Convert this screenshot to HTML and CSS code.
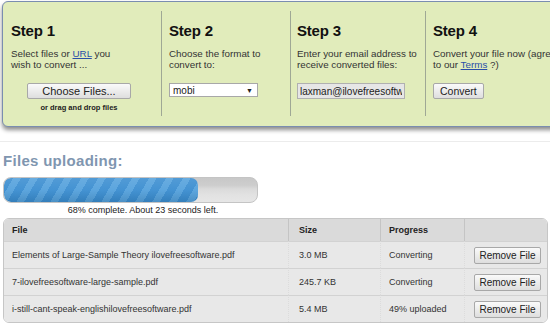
FILE: index.html
```html
<!DOCTYPE html>
<html lang="en">
<head>
  <meta charset="UTF-8">
  <title>File Converter</title>
  <link rel="stylesheet" href="styles.css">
</head>
<body>

  <div class="steps">
    <div class="step step1">
      <h2>Step 1</h2>
      <p>Select files or <a href="#">URL</a> you<br>wish to convert ...</p>
      <div class="choose">
        <button class="btn choose-btn">Choose Files...</button>
        <div class="drop">or drag and drop files</div>
      </div>
    </div>
    <div class="step step2">
      <h2>Step 2</h2>
      <p>Choose the format to<br>convert to:</p>
      <div class="select"><span>mobi</span><span class="arrow">&#9660;</span></div>
    </div>
    <div class="step step3">
      <h2>Step 3</h2>
      <p>Enter your email address to<br>receive converted files:</p>
      <input type="text" class="email" value="laxman@ilovefreesoftware.com" readonly>
    </div>
    <div class="step step4">
      <h2>Step 4</h2>
      <p>Convert your file now (agree<br>to our <a href="#">Terms</a> ?)</p>
      <button class="btn">Convert</button>
    </div>
  </div>

  <div class="rule"></div>

  <h1>Files uploading:</h1>

  <div class="bar">
    <div class="bar-fill" style="width: 194px"></div>
  </div>
  <div class="status">68% complete. About 23 seconds left.</div>

  <table class="files">
    <thead>
      <tr><th class="c-file">File</th><th class="c-size">Size</th><th class="c-prog">Progress</th><th></th></tr>
    </thead>
    <tbody>
      <tr>
        <td>Elements of Large-Sample Theory ilovefreesoftware.pdf</td>
        <td>3.0 MB</td>
        <td>Converting</td>
        <td><button class="btn remove">Remove File</button></td>
      </tr>
      <tr>
        <td>7-ilovefreesoftware-large-sample.pdf</td>
        <td>245.7 KB</td>
        <td>Converting</td>
        <td><button class="btn remove">Remove File</button></td>
      </tr>
      <tr>
        <td>i-still-cant-speak-englishilovefreesoftware.pdf</td>
        <td>5.4 MB</td>
        <td>49% uploaded</td>
        <td><button class="btn remove">Remove File</button></td>
      </tr>
    </tbody>
  </table>

</body>
</html>
```

FILE: styles.css
```css
body {
  margin: 0;
  font-family: 'Liberation Sans', Arial, sans-serif;
  color: #222;
  background-color: #fff;
  overflow: hidden;
}

.steps {
  display: flex;
  width: 580px;
  height: 126px;
  margin: 1px 0 0 2px;
  background-color: #e1ecbb;
  border: 1px solid #7a8db0;
  border-radius: 6px;
  box-shadow: 0 3px 4px rgba(0, 0, 0, 0.45);
  box-sizing: border-box;
}

.step {
  margin-top: 9px;
  height: 105px;
  padding-top: 11px;
  box-sizing: border-box;
  border-right: 1px solid #9fa895;
}

.step1 { width: 159px; padding-left: 8px; }
.step2 { width: 129px; padding-left: 7px; }
.step3 { width: 135px; padding-left: 6px; }
.step4 { padding-left: 7px; border-right: none; }

.step h2 {
  margin: 0;
  font-size: 15px;
  line-height: 18px;
  letter-spacing: -0.2px;
  color: #111;
}

.step p {
  margin: 8px 0 0;
  font-size: 9.8px;
  line-height: 11px;
  color: #333;
  white-space: nowrap;
}

.step a {
  color: #2a4fa8;
}

.btn {
  font-family: 'Liberation Sans', Arial, sans-serif;
  font-size: 10.5px;
  color: #222;
  background: linear-gradient(#fafafa, #dedede);
  border: 1px solid #a8a8a8;
  border-radius: 2px;
  padding: 0 6px;
  height: 16px;
  cursor: pointer;
}

.step .btn,
.step .select,
.step .email {
  margin-top: 13px;
}

.choose {
  width: 104px;
  margin-left: 16px;
  text-align: center;
}

.choose-btn {
  width: 104px;
  font-size: 11px;
}

.drop {
  margin-top: 4px;
  font-size: 7.5px;
  font-weight: bold;
  color: #222;
}

.select {
  display: flex;
  justify-content: space-between;
  align-items: center;
  width: 89px;
  height: 14px;
  padding: 0 4px 0 3px;
  box-sizing: border-box;
  background-color: #fff;
  border: 1px solid #a8a8a8;
  font-size: 10px;
}

.select .arrow {
  font-size: 7px;
}

.email {
  display: block;
  width: 108px;
  height: 16px;
  padding: 0 2px;
  box-sizing: border-box;
  font-family: 'Liberation Sans', Arial, sans-serif;
  font-size: 10px;
  color: #222;
  background-color: #e6e6e6;
  border: 1px solid #b0b0b0;
}

.rule {
  height: 1px;
  margin-top: 14px;
  background-color: #ececec;
}

h1 {
  margin: 9px 0 0 3px;
  font-size: 15px;
  line-height: 20px;
  letter-spacing: 0.3px;
  color: #8096b0;
}

.bar {
  width: 255px;
  height: 26px;
  margin: 6px 0 0 3px;
  box-sizing: border-box;
  border: 1px solid #c4c4c4;
  border-radius: 8px;
  background: linear-gradient(#c8c8c8, #cdcdcd 30%, #dadada 45%, #e2e2e2 70%, #e6e6e6);
  overflow: hidden;
}

.bar-fill {
  height: 100%;
  border-radius: 7px;
  background:
    linear-gradient(rgba(255, 255, 255, 0.12), rgba(255, 255, 255, 0.05) 50%, rgba(0, 0, 0, 0.1)),
    repeating-linear-gradient(120deg, #3a8dd0 0, #3a8dd0 8px, #54a1dc 8px, #54a1dc 14.7px);
}

.status {
  width: 286px;
  margin-top: 2px;
  text-align: center;
  font-size: 9px;
  line-height: 11px;
  color: #222;
}

.files {
  width: 545px;
  margin: 2px 0 0 3px;
  border-collapse: separate;
  border-spacing: 0;
  border: 1px solid #c6c6c6;
  border-radius: 6px;
  overflow: hidden;
  font-size: 9px;
  color: #333;
}

.files th {
  height: 22px;
  padding: 0 8px;
  text-align: left;
  background-color: #dadada;
  color: #222;
  border-left: 1px solid #c4c4c4;
}

.files td {
  height: 26px;
  padding: 0 8px;
  background-color: #e8e8e8;
  border-top: 1px solid #d2d2d2;
  border-left: 1px dotted #dcdcdc;
}

.files th:first-child,
.files td:first-child {
  border-left: none;
}

.c-file { width: 268px; }
.c-size { width: 73px; padding-left: 10px !important; }
.c-prog { width: 67px; }

.files td:nth-child(2) { padding-left: 10px; }

.files td:last-child {
  text-align: right;
  padding-right: 6px;
}

.remove {
  width: 67px;
  height: 17px;
  padding: 0;
  font-size: 10px;
}
```
